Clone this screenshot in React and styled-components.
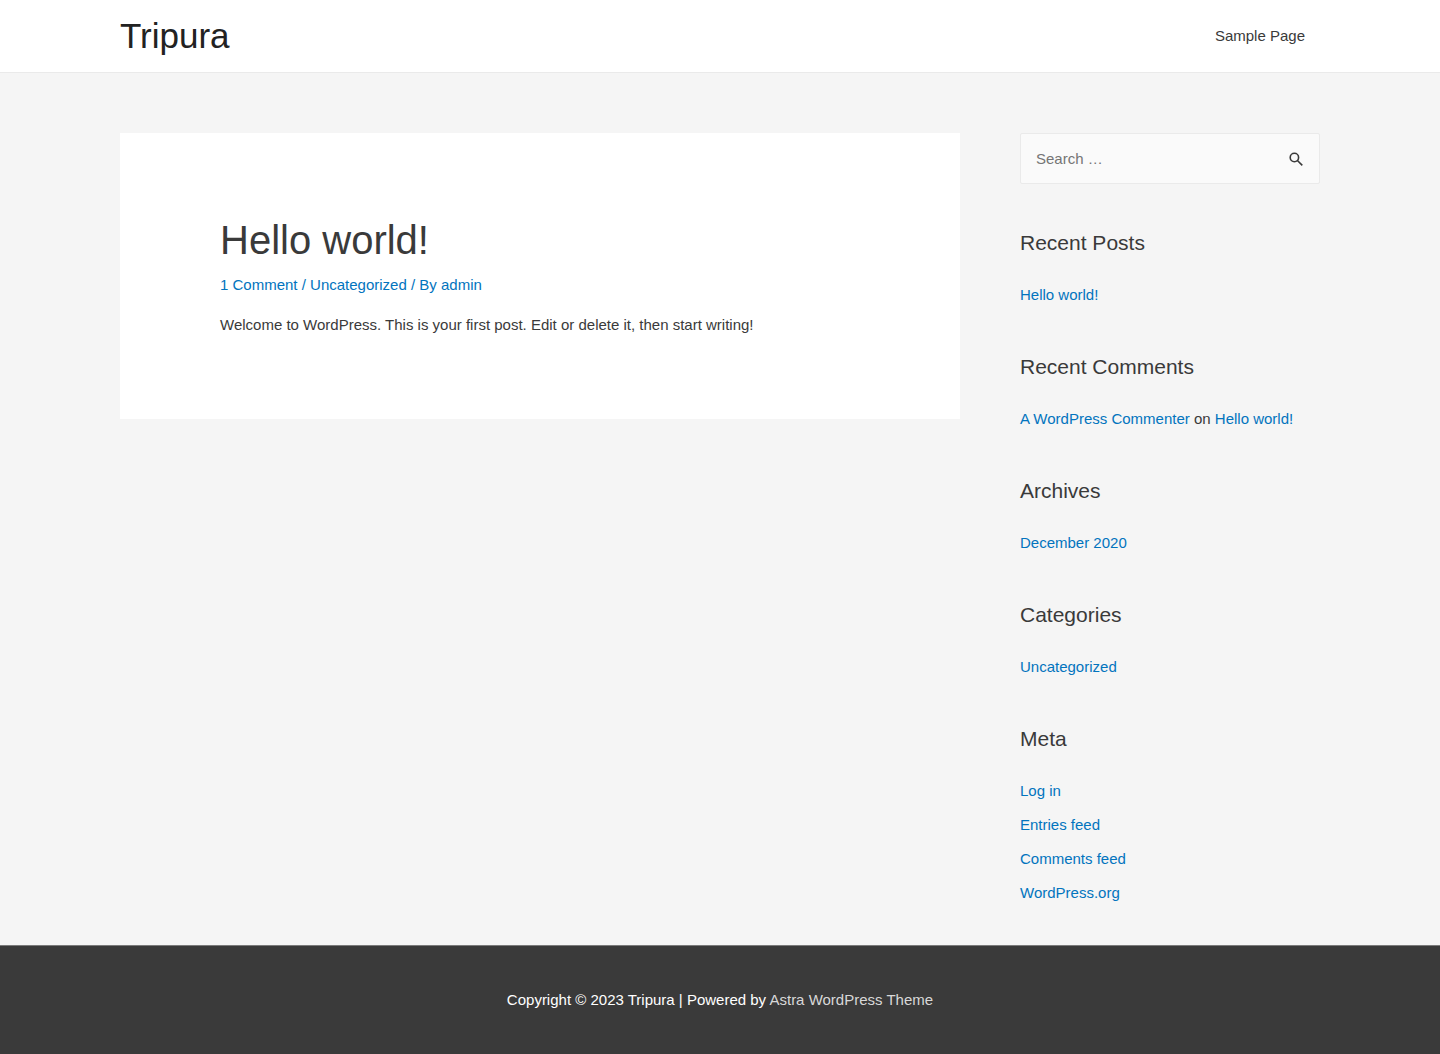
import React from "react";
import styled, { createGlobalStyle } from "styled-components";

const GlobalStyle = createGlobalStyle`
  *, *::before, *::after { box-sizing: border-box; }
  body {
    margin: 0;
    background: #f5f5f5;
    color: #3a3a3a;
    font: 15px/28px "Liberation Sans", Arial, sans-serif;
  }
`;

const Page = styled.div`
  display: flex;
  flex-direction: column;
  min-height: 100vh;
`;

const Container = styled.div`
  width: 100%;
  max-width: 1240px;
  margin: 0 auto;
  padding: 0 20px;
`;

const Header = styled.header`
  background: #fff;
  border-bottom: 1px solid #eaeaea;
`;

const HeaderRow = styled(Container)`
  display: flex;
  align-items: center;
  justify-content: space-between;
  height: 72px;
`;

const SiteTitle = styled.a`
  color: #222;
  font-size: 35px;
  line-height: 42px;
  text-decoration: none;
`;

const NavLink = styled.a`
  padding: 0 15px;
  color: #3a3a3a;
  text-decoration: none;
`;

const Link = styled.a`
  color: #0274be;
  text-decoration: none;
  &:hover { color: #3a3a3a; }
`;

const Content = styled(Container)`
  display: flex;
  flex: 1;
  align-items: flex-start;
  gap: 60px;
  padding-top: 60px;
  padding-bottom: 38px;
  @media (max-width: 900px) { flex-direction: column; align-items: stretch; }
`;

const Main = styled.main`
  flex: 1;
  min-width: 0;
`;

const Article = styled.article`
  padding: 80px 100px;
  background: #fff;
  @media (max-width: 900px) { padding: 40px 20px; }
`;

const PostTitle = styled.h1`
  margin: 0 0 4px;
  font-size: 40px;
  font-weight: 400;
  line-height: 54px;
`;

const Meta = styled.div`
  margin-bottom: 12px;
  color: #0274be;
`;

const Paragraph = styled.p`
  margin: 0;
`;

const Sidebar = styled.aside`
  width: 300px;
  @media (max-width: 900px) { width: 100%; }
`;

const SearchForm = styled.form`
  display: flex;
  height: 51px;
  margin-bottom: 43px;
  border: 1px solid #eaeaea;
  border-radius: 2px;
  background: #fafafa;
`;

const SearchInput = styled.input`
  flex: 1;
  min-width: 0;
  padding: 0 15px;
  border: 0;
  background: transparent;
  color: #666;
  font: inherit;
  &::placeholder { color: #757575; opacity: 1; }
`;

const SearchButton = styled.button`
  display: flex;
  align-items: center;
  justify-content: center;
  width: 46px;
  padding: 0;
  border: 0;
  background: transparent;
  color: #3a3a3a;
  cursor: pointer;
`;

const Widget = styled.section`
  & + & { margin-top: 42px; }
`;

const WidgetTitle = styled.h2`
  margin: 0 0 22px;
  font-size: 21px;
  font-weight: 400;
  line-height: 32px;
`;

const List = styled.ul`
  display: grid;
  gap: 6px;
  margin: 0;
  padding: 0;
  list-style: none;
`;

const Footer = styled.footer`
  border-top: 1px solid #7a7a7a;
  background: #3a3a3a;
  color: #fff;
  text-align: center;
`;

const Copyright = styled(Container)`
  padding-top: 40px;
  padding-bottom: 40px;
`;

const FooterLink = styled.a`
  color: #d8d8d8;
  text-decoration: none;
`;

const widgets = [
  { title: "Recent Posts", items: [<Link href="#post">Hello world!</Link>] },
  {
    title: "Recent Comments",
    items: [
      <>
        <Link href="#commenter">A WordPress Commenter</Link> on <Link href="#post">Hello world!</Link>
      </>,
    ],
  },
  { title: "Archives", items: [<Link href="#archive">December 2020</Link>] },
  { title: "Categories", items: [<Link href="#category">Uncategorized</Link>] },
  {
    title: "Meta",
    items: ["Log in", "Entries feed", "Comments feed", "WordPress.org"].map((name) => (
      <Link href="#meta">{name}</Link>
    )),
  },
];

export default function App() {
  return (
    <Page>
      <GlobalStyle />
      <Header>
        <HeaderRow>
          <SiteTitle href="#home">Tripura</SiteTitle>
          <nav>
            <NavLink href="#sample">Sample Page</NavLink>
          </nav>
        </HeaderRow>
      </Header>
      <Content>
        <Main>
          <Article id="post">
            <PostTitle>Hello world!</PostTitle>
            <Meta>
              <Link href="#comments">1 Comment</Link> / <Link href="#category">Uncategorized</Link> / By{" "}
              <Link href="#author">admin</Link>
            </Meta>
            <Paragraph>
              Welcome to WordPress. This is your first post. Edit or delete it, then start writing!
            </Paragraph>
          </Article>
        </Main>
        <Sidebar>
          <SearchForm role="search" onSubmit={(event) => event.preventDefault()}>
            <SearchInput type="search" aria-label="Search for:" placeholder="Search …" />
            <SearchButton type="submit" aria-label="Search">
              <svg
                width="18"
                height="18"
                viewBox="0 0 18 18"
                fill="none"
                stroke="currentColor"
                strokeWidth="1.6"
                aria-hidden="true"
              >
                <circle cx="7.4" cy="7.5" r="4.2" />
                <path d="M10.4 10.5l4.9 4.9" />
              </svg>
            </SearchButton>
          </SearchForm>
          {widgets.map(({ title, items }) => (
            <Widget key={title}>
              <WidgetTitle>{title}</WidgetTitle>
              <List>
                {items.map((item, index) => (
                  <li key={index}>{item}</li>
                ))}
              </List>
            </Widget>
          ))}
        </Sidebar>
      </Content>
      <Footer>
        <Copyright>
          Copyright © 2023 Tripura | Powered by <FooterLink href="#astra">Astra WordPress Theme</FooterLink>
        </Copyright>
      </Footer>
    </Page>
  );
}
